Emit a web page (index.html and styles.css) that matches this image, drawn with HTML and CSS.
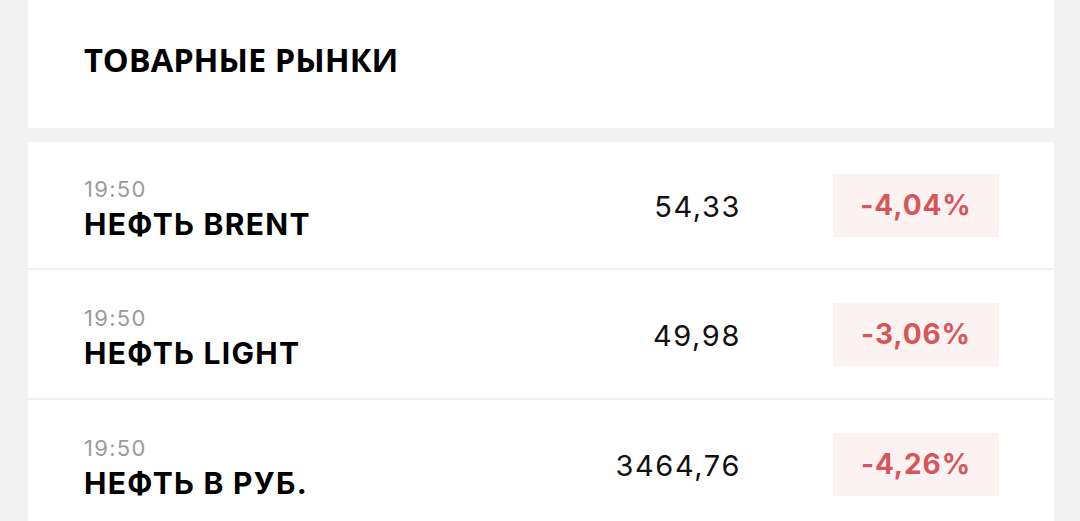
FILE: index.html
```html
<!DOCTYPE html>
<html lang="ru">
<head>
<meta charset="utf-8">
<link rel="stylesheet" href="styles.css">
</head>
<body>
<div class="page">
  <div class="header-card">
    <h1 class="title">ТОВАРНЫЕ РЫНКИ</h1>
  </div>
  <div class="list-card">
    <div class="row">
      <div class="info">
        <div class="time">19:50</div>
        <div class="name">НЕФТЬ BRENT</div>
      </div>
      <div class="value">54,33</div>
      <div class="change"><span>-4,04%</span></div>
    </div>
    <div class="row">
      <div class="info">
        <div class="time">19:50</div>
        <div class="name">НЕФТЬ LIGHT</div>
      </div>
      <div class="value">49,98</div>
      <div class="change"><span>-3,06%</span></div>
    </div>
    <div class="row">
      <div class="info">
        <div class="time">19:50</div>
        <div class="name">НЕФТЬ В РУБ.</div>
      </div>
      <div class="value">3464,76</div>
      <div class="change"><span>-4,26%</span></div>
    </div>
  </div>
</div>
</body>
</html>
```

FILE: styles.css
```css
html, body {
  margin: 0;
  padding: 0;
  background: #f2f2f2;
  height: 100%;
  overflow: hidden;
}
.page {
  margin: 0 26px 0 28px;
  display: flex;
  flex-direction: column;
  gap: 14px;
}
.header-card {
  background: #fff;
  height: 128px;
  display: flex;
  align-items: center;
  padding-left: 56px;
  box-sizing: border-box;
}
.title {
  margin: 0;
  font-family: "Open Sans", sans-serif;
  font-weight: 700;
  font-size: 32.6px;
  color: #000;
  line-height: 1;
  padding-bottom: 8px;
}
.list-card {
  background: #fff;
}
.row {
  height: 130px;
  box-sizing: border-box;
  display: flex;
  align-items: center;
  padding: 0 55px 0 56px;
  border-bottom: 2px solid #f0f0f0;
  font-family: Inter, sans-serif;
}
.row:first-child {
  height: 128px;
}
.info {
  flex: 1;
  display: flex;
  flex-direction: column;
  padding-top: 8px;
}
.time {
  font-size: 22px;
  color: #9b9b9b;
  line-height: 26px;
  letter-spacing: 1.3px;
  margin-bottom: 4px;
}
.name {
  font-size: 30px;
  font-weight: 700;
  color: #000;
  line-height: 36px;
  letter-spacing: 1.3px;
}
.value {
  font-size: 29px;
  color: #111;
  font-weight: 400;
  text-align: right;
  letter-spacing: 1.6px;
  margin-right: 92px;
  padding-top: 3px;
}
.change {
  width: 166px;
  height: 63px;
  background: #fdf2f2;
  display: flex;
  align-items: center;
  justify-content: center;
}
.change span {
  font-size: 28px;
  font-weight: 700;
  color: #d5575a;
  letter-spacing: 0.9px;
}
```
